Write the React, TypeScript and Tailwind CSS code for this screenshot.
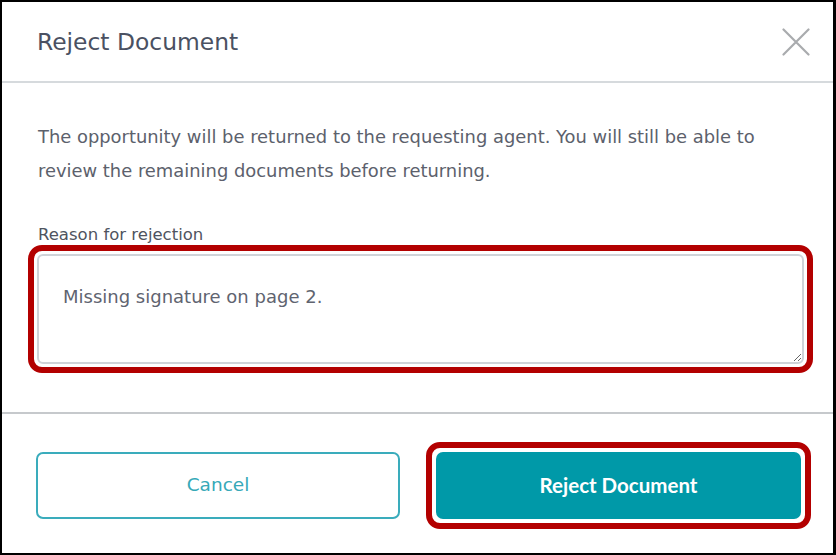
import React from "react";

export default function App() {
  const font = { fontFamily: "'DejaVu Sans', sans-serif" };
  return (
    <div
      className="w-[836px] h-[555px] border-2 border-r-[3px] border-black bg-white flex flex-col box-border overflow-hidden"
      style={font}
    >
      <div className="h-[81px] shrink-0 border-b-2 border-[#d6dadd] flex items-center justify-between pl-[35px] pr-[23px]">
        <h2 className="text-[23.4px] text-[#4a5162] leading-none mt-[2px]">Reject Document</h2>
        <button className="w-[28px] h-[28px] flex items-center justify-center mt-[1px]" aria-label="Close">
          <svg width="28" height="28" viewBox="0 0 28 28" fill="none">
            <path d="M1.5 1.5 L26.5 26.5 M26.5 1.5 L1.5 26.5" stroke="#a9abae" strokeWidth="2.2" strokeLinecap="round" />
          </svg>
        </button>
      </div>

      <div className="flex-1 flex flex-col pl-[36px] pt-[37px]">
        <p className="text-[17.9px] leading-[34px] text-[#5c616c] w-[760px]">
          The opportunity will be returned to the requesting agent. You will still be able to review the remaining documents before returning.
        </p>
        <label className="mt-[37px] text-[16.5px] leading-[20px] text-[#4f5460]">Reason for rejection</label>
        <div className="mt-0 ml-[-10px] w-[785px] border-[6px] border-[#b30000] rounded-[14px] p-[3px] bg-white">
          <textarea
            className="block w-full h-[110px] border-2 border-[#cfd3d8] rounded-[6px] pl-[24px] pt-[29px] text-[18px] leading-[24px] text-[#5f6470] outline-none"
            style={font}
            defaultValue="Missing signature on page 2."
          />
        </div>
      </div>

      <div className="h-[141px] shrink-0 border-t-2 border-[#c6c9cc] flex items-center pl-[34px] pt-[3px]">
        <button className="w-[364px] h-[67px] border-2 border-[#3aacbc] rounded-[7px] text-[18.5px] text-[#36a9b8] bg-white">
          Cancel
        </button>
        <div className="ml-[26px] border-[6px] border-[#b30000] rounded-[14px] p-[4px] bg-white">
          <button
            className="block w-[365px] h-[67px] rounded-[7px] bg-[#0099a8] text-white text-[20.5px] font-bold"
            style={{ fontFamily: "Lato, sans-serif" }}
          >
            Reject Document
          </button>
        </div>
      </div>
    </div>
  );
}
